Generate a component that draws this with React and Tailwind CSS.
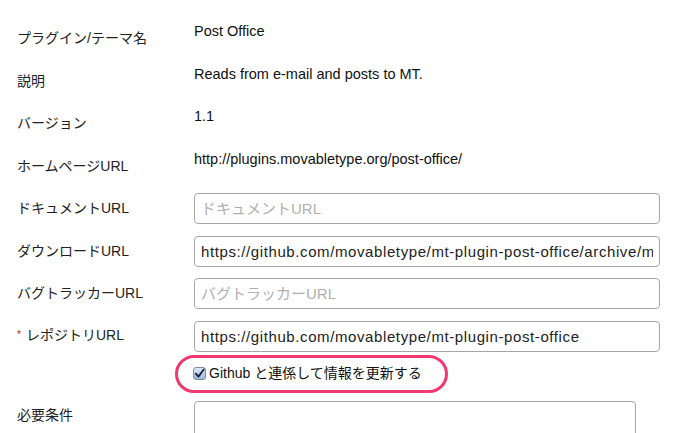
const rows = [
  { label: "プラグイン/テーマ名", value: "Post Office" },
  { label: "説明", value: "Reads from e-mail and posts to MT." },
  { label: "バージョン", value: "1.1" },
  { label: "ホームページURL", value: "http://plugins.movabletype.org/post-office/" },
];

const inputs = [
  { label: "ドキュメントURL", placeholder: "ドキュメントURL" },
  { label: "ダウンロードURL", value: "https://github.com/movabletype/mt-plugin-post-office/archive/master.zip" },
  { label: "バグトラッカーURL", placeholder: "バグトラッカーURL" },
  { label: "レポジトリURL", value: "https://github.com/movabletype/mt-plugin-post-office", required: true },
];

const font = { fontFamily: '"Liberation Sans", "Noto Sans CJK JP", sans-serif' };

const Label = ({ children, required }) => (
  <div className="w-[177px] shrink-0 text-[14px] leading-[17px] text-[#222]">
    {required && <span className="text-[10px] text-[#c0152f] mr-[5px] relative -top-[2px]">*</span>}
    {children}
  </div>
);

export default function App() {
  return (
    <div className="w-[690px] h-[433px] overflow-hidden bg-white pl-[17px] pt-[23px]" style={font}>
      <div className="flex flex-col gap-[11.5px]">
        {rows.map((r) => (
          <div key={r.label} className="flex items-center h-[31px]">
            <Label>{r.label}</Label>
            <div className="self-start text-[14.5px] leading-[17px] text-[#111]">{r.value}</div>
          </div>
        ))}
        {inputs.map((r) => (
          <div key={r.label} className="flex items-center h-[31px]">
            <Label required={r.required}>{r.label}</Label>
            <input
              readOnly
              defaultValue={r.value}
              placeholder={r.placeholder}
              className="w-[466px] h-[31px] border border-[#a7a7a7] rounded-[4px] px-[6px] text-[15px] tracking-[0.6px] text-[#222] placeholder:text-[#b0b0b0] placeholder:tracking-normal outline-none"
              style={font}
            />
          </div>
        ))}
      </div>

      <div className="ml-[158px] mt-[3px] w-[273px] h-[38px] border-[3px] border-[#f0396f] rounded-full flex items-center pl-[15px]">
        <span className="w-[13px] h-[13px] mr-[3px] border border-[#7d8aa0] rounded-[3px] bg-gradient-to-b from-[#dce8f8] to-[#9fb6dc] flex items-center justify-center">
          <svg viewBox="0 0 12 12" className="w-[11px] h-[11px]">
            <path d="M2 6.2 L4.8 9.4 L10.6 1.6" fill="none" stroke="#15223a" strokeWidth="2" strokeLinecap="round" strokeLinejoin="round" />
          </svg>
        </span>
        <span className="text-[14px] text-[#111] leading-[17px]">Github と連係して情報を更新する</span>
      </div>

      <div className="flex mt-[8px]">
        <div className="w-[177px] shrink-0 pt-[6px] text-[14px] leading-[17px] text-[#222]">必要条件</div>
        <div className="w-[442px] h-[60px] border border-[#a7a7a7] rounded-[4px]" />
      </div>
    </div>
  );
}
